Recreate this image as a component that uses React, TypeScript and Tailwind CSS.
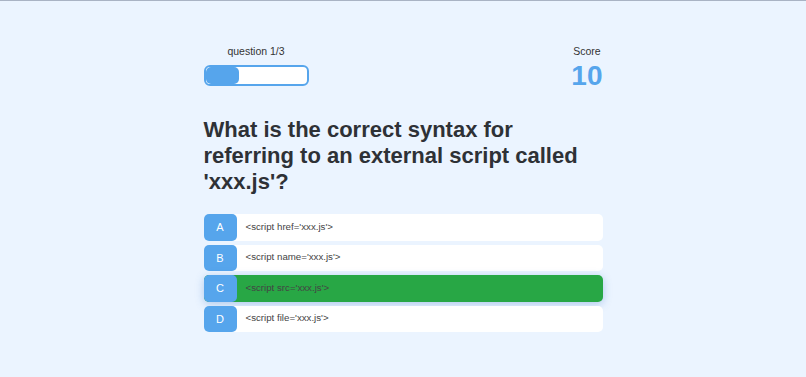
const options = [
  { letter: "A", text: "<script href='xxx.js'>" },
  { letter: "B", text: "<script name='xxx.js'>" },
  { letter: "C", text: "<script src='xxx.js'>", correct: true },
  { letter: "D", text: "<script file='xxx.js'>" },
];

export default function App() {
  return (
    <div
      className="min-h-[377px] bg-[#ebf4ff] border-t border-[#a9b3c4]"
      style={{ fontFamily: '"Liberation Sans", Arial, sans-serif' }}
    >
      <div className="w-[399px] mx-auto pt-[43px]">
        <div className="flex justify-between items-start">
          <div className="flex flex-col items-center w-[105px]">
            <div className="text-[10.5px] leading-[14px] text-[#333]">question 1/3</div>
            <div className="mt-[7px] w-[105px] h-[21px] border-2 border-[#56a5ec] rounded-[6px] bg-white overflow-hidden">
              <div className="h-full w-[33px] bg-[#56a5ec] rounded-[5px]" />
            </div>
          </div>
          <div className="flex flex-col items-center">
            <div className="text-[10.5px] leading-[14px] text-[#333]">Score</div>
            <div className="text-[28px] leading-[29px] font-bold text-[#56a5ec] mt-[3px]">10</div>
          </div>
        </div>

        <h1 className="mt-[27px] text-[22px] leading-[26px] font-bold text-[#2e3136]">
          What is the correct syntax for referring to an external script called 'xxx.js'?
        </h1>

        <div className="mt-[19px] flex flex-col gap-[4px]">
          {options.map((o) => (
            <div
              key={o.letter}
              className={`flex h-[26.5px] rounded-[5px] ${
                o.correct ? "bg-[#28a745] shadow-[0_2px_8px_rgba(60,120,200,0.35)]" : "bg-white"
              }`}
            >
              <div className="w-[33px] h-full rounded-[5px] bg-[#56a5ec] text-white text-[11px] flex items-center justify-center">
                {o.letter}
              </div>
              <div className="pl-[9px] flex items-center text-[9.7px] text-[#444]">{o.text}</div>
            </div>
          ))}
        </div>
      </div>
    </div>
  );
}
